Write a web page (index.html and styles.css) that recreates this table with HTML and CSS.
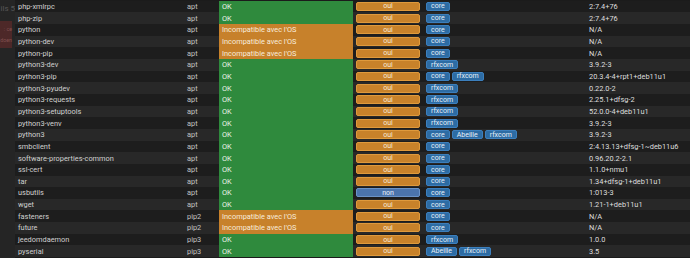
FILE: index.html
```html
<!DOCTYPE html>
<html lang="fr">
<head>
<meta charset="utf-8">
<title>Dépendances</title>
<link rel="stylesheet" href="styles.css">
</head>
<body>
<div class="page">
  <aside class="side">
    <div class="side-title">ils 5</div>
    <div class="side-alert"><span>: ce</span><span>doen</span></div>
  </aside>
  <div class="table">
    <div class="row"><div class="c name">php-xmlrpc</div><div class="c type">apt</div><div class="c status ok">OK</div><div class="c act"><span class="btn oui">oui</span></div><div class="c deps"><span class="badge">core</span></div><div class="c ver">2:7.4+76</div></div>
    <div class="row"><div class="c name">php-zip</div><div class="c type">apt</div><div class="c status ok">OK</div><div class="c act"><span class="btn oui">oui</span></div><div class="c deps"><span class="badge">core</span></div><div class="c ver">2:7.4+76</div></div>
    <div class="row"><div class="c name">python</div><div class="c type">apt</div><div class="c status ko">Incompatible avec l'OS</div><div class="c act"><span class="btn oui">oui</span></div><div class="c deps"><span class="badge">core</span></div><div class="c ver">N/A</div></div>
    <div class="row"><div class="c name">python-dev</div><div class="c type">apt</div><div class="c status ko">Incompatible avec l'OS</div><div class="c act"><span class="btn oui">oui</span></div><div class="c deps"><span class="badge">core</span></div><div class="c ver">N/A</div></div>
    <div class="row"><div class="c name">python-pip</div><div class="c type">apt</div><div class="c status ko">Incompatible avec l'OS</div><div class="c act"><span class="btn oui">oui</span></div><div class="c deps"><span class="badge">core</span></div><div class="c ver">N/A</div></div>
    <div class="row"><div class="c name">python3-dev</div><div class="c type">apt</div><div class="c status ok">OK</div><div class="c act"><span class="btn oui">oui</span></div><div class="c deps"><span class="badge">rfxcom</span></div><div class="c ver">3.9.2-3</div></div>
    <div class="row"><div class="c name">python3-pip</div><div class="c type">apt</div><div class="c status ok">OK</div><div class="c act"><span class="btn oui">oui</span></div><div class="c deps"><span class="badge">core</span><span class="badge">rfxcom</span></div><div class="c ver">20.3.4-4+rpt1+deb11u1</div></div>
    <div class="row"><div class="c name">python3-pyudev</div><div class="c type">apt</div><div class="c status ok">OK</div><div class="c act"><span class="btn oui">oui</span></div><div class="c deps"><span class="badge">rfxcom</span></div><div class="c ver">0.22.0-2</div></div>
    <div class="row"><div class="c name">python3-requests</div><div class="c type">apt</div><div class="c status ok">OK</div><div class="c act"><span class="btn oui">oui</span></div><div class="c deps"><span class="badge">rfxcom</span></div><div class="c ver">2.25.1+dfsg-2</div></div>
    <div class="row"><div class="c name">python3-setuptools</div><div class="c type">apt</div><div class="c status ok">OK</div><div class="c act"><span class="btn oui">oui</span></div><div class="c deps"><span class="badge">rfxcom</span></div><div class="c ver">52.0.0-4+deb11u1</div></div>
    <div class="row"><div class="c name">python3-venv</div><div class="c type">apt</div><div class="c status ok">OK</div><div class="c act"><span class="btn oui">oui</span></div><div class="c deps"><span class="badge">rfxcom</span></div><div class="c ver">3.9.2-3</div></div>
    <div class="row"><div class="c name">python3</div><div class="c type">apt</div><div class="c status ok">OK</div><div class="c act"><span class="btn oui">oui</span></div><div class="c deps"><span class="badge">core</span><span class="badge">Abeille</span><span class="badge">rfxcom</span></div><div class="c ver">3.9.2-3</div></div>
    <div class="row"><div class="c name">smbclient</div><div class="c type">apt</div><div class="c status ok">OK</div><div class="c act"><span class="btn oui">oui</span></div><div class="c deps"><span class="badge">core</span></div><div class="c ver">2:4.13.13+dfsg-1~deb11u6</div></div>
    <div class="row"><div class="c name">software-properties-common</div><div class="c type">apt</div><div class="c status ok">OK</div><div class="c act"><span class="btn oui">oui</span></div><div class="c deps"><span class="badge">core</span></div><div class="c ver">0.96.20.2-2.1</div></div>
    <div class="row"><div class="c name">ssl-cert</div><div class="c type">apt</div><div class="c status ok">OK</div><div class="c act"><span class="btn oui">oui</span></div><div class="c deps"><span class="badge">core</span></div><div class="c ver">1.1.0+nmu1</div></div>
    <div class="row"><div class="c name">tar</div><div class="c type">apt</div><div class="c status ok">OK</div><div class="c act"><span class="btn oui">oui</span></div><div class="c deps"><span class="badge">core</span></div><div class="c ver">1.34+dfsg-1+deb11u1</div></div>
    <div class="row"><div class="c name">usbutils</div><div class="c type">apt</div><div class="c status ok">OK</div><div class="c act"><span class="btn non">non</span></div><div class="c deps"><span class="badge">core</span></div><div class="c ver">1:013-3</div></div>
    <div class="row"><div class="c name">wget</div><div class="c type">apt</div><div class="c status ok">OK</div><div class="c act"><span class="btn oui">oui</span></div><div class="c deps"><span class="badge">core</span></div><div class="c ver">1.21-1+deb11u1</div></div>
    <div class="row"><div class="c name">fasteners</div><div class="c type">pip2</div><div class="c status ko">Incompatible avec l'OS</div><div class="c act"><span class="btn oui">oui</span></div><div class="c deps"><span class="badge">core</span></div><div class="c ver">N/A</div></div>
    <div class="row"><div class="c name">future</div><div class="c type">pip2</div><div class="c status ko">Incompatible avec l'OS</div><div class="c act"><span class="btn oui">oui</span></div><div class="c deps"><span class="badge">core</span></div><div class="c ver">N/A</div></div>
    <div class="row"><div class="c name">jeedomdaemon</div><div class="c type">pip3</div><div class="c status ok">OK</div><div class="c act"><span class="btn oui">oui</span></div><div class="c deps"><span class="badge">rfxcom</span></div><div class="c ver">1.0.0</div></div>
    <div class="row"><div class="c name">pyserial</div><div class="c type">pip3</div><div class="c status ok">OK</div><div class="c act"><span class="btn oui">oui</span></div><div class="c deps"><span class="badge">Abeille</span><span class="badge">rfxcom</span></div><div class="c ver">3.5</div></div>
  </div>
</div>
</body>
</html>
```

FILE: styles.css
```css
* { box-sizing: border-box; }
html, body {
  margin: 0;
  background: #1b1b1b;
  height: 100%;
  overflow: hidden;
}
body {
  font-family: Roboto, "Liberation Sans", sans-serif;
  font-size: 7.4px;
  color: #d2d2d2;
}
.page {
  display: flex;
  align-items: flex-start;
  height: 258px;
}
.side {
  width: 15px;
  flex: none;
  height: 100%;
  background: #252525;
  display: flex;
  flex-direction: column;
  overflow: hidden;
}
.side-title {
  height: 21px;
  display: flex;
  align-items: center;
  justify-content: flex-end;
  white-space: nowrap;
  font-size: 8px;
  color: #575757;
  padding-bottom: 5px;
}
.side-alert {
  width: 12px;
  height: 27px;
  background: #4d2828;
  display: flex;
  flex-direction: column;
  justify-content: center;
  align-items: flex-end;
  gap: 5px;
  color: #82504f;
  font-size: 5.3px;
  white-space: nowrap;
}
.table {
  flex: 1;
  padding-top: 0.67px;
  min-width: 0;
}
.row {
  display: grid;
  grid-template-columns: 170px 34px 134px 70px 163px 1fr;
  height: 11.667px;
  background: #1d1d1d;
}
.row:nth-child(even) {
  background: #282828;
}
.c {
  display: flex;
  align-items: center;
  white-space: nowrap;
  overflow: hidden;
  min-width: 0;
}
.name { padding-left: 3px; color: #d0d0d0; }
.type { padding-left: 2px; color: #c0c0c0; }
.status { padding-left: 3px; }
.status.ok { background: #2f8a3d; color: #eaf2ea; }
.status.ko { background: #c7812b; color: #f8ecdc; }
.act { padding-left: 3px; }
.btn {
  width: 64px;
  height: 9px;
  border-radius: 2px;
  display: flex;
  align-items: center;
  justify-content: center;
  font-size: 7px;
  color: #f5e9d8;
}
.btn.oui { background: #c8822a; border: 1px solid #df9a3c; }
.btn.non { background: #4b74ac; border: 1px solid #6b93c6; color: #e6eef8; }
.deps { padding-left: 3px; gap: 2px; }
.badge {
  height: 9px;
  padding: 0 4px;
  border-radius: 2px;
  background: #2d6ca4;
  border: 1px solid #3c7fbd;
  color: #e8f0f8;
  font-size: 7px;
  display: flex;
  align-items: center;
}
.ver { padding-left: 3px; color: #dedede; }
```
